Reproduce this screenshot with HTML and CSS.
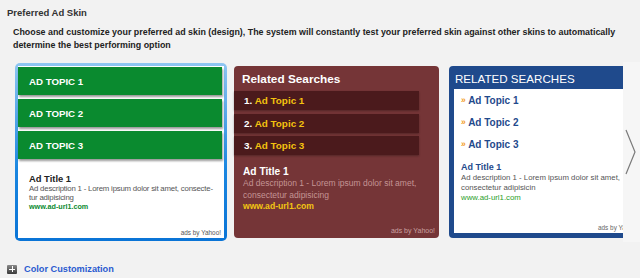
FILE: index.html
```html
<!DOCTYPE html>
<html lang="en">

<head>
    <meta charset="UTF-8">
    <meta name="viewport" content="width=device-width, initial-scale=1.0">
    <title>Preferred Ad Skin</title>
    <link rel="stylesheet" href="styles.css">
</head>

<body>
    <h1 class="section-title">Preferred Ad Skin</h1>
    <p class="intro">Choose and customize your preferred ad skin (design), The system will constantly test your preferred skin against other skins to automatically determine the best performing option</p>

    <div class="carousel">
        <div class="viewport">
            <div class="track">
                <div class="skin skin-green selected">
                    <div class="green-topic">AD TOPIC 1</div>
                    <div class="green-topic">AD TOPIC 2</div>
                    <div class="green-topic">AD TOPIC 3</div>
                    <div class="green-ad">
                        <div class="ad-title">Ad Title 1</div>
                        <div class="ad-desc">Ad description 1 - Lorem ipsum dolor sit amet, consecte-tur adipisicing</div>
                        <div class="ad-url">www.ad-url1.com</div>
                    </div>
                    <div class="ads-by">ads by Yahoo!</div>
                </div>

                <div class="skin skin-maroon">
                    <div class="maroon-head">Related Searches</div>
                    <div class="maroon-topic">1. <span>Ad Topic 1</span></div>
                    <div class="maroon-topic">2. <span>Ad Topic 2</span></div>
                    <div class="maroon-topic">3. <span>Ad Topic 3</span></div>
                    <div class="maroon-ad">
                        <div class="ad-title">Ad Title 1</div>
                        <div class="ad-desc">Ad description 1 - Lorem ipsum dolor sit amet, consectetur adipisicing</div>
                        <div class="ad-url">www.ad-url1.com</div>
                    </div>
                    <div class="ads-by">ads by Yahoo!</div>
                </div>

                <div class="skin skin-blue">
                    <div class="blue-head">RELATED SEARCHES</div>
                    <div class="blue-body">
                        <div class="blue-topic"><span>&raquo;</span> Ad Topic 1</div>
                        <div class="blue-topic"><span>&raquo;</span> Ad Topic 2</div>
                        <div class="blue-topic"><span>&raquo;</span> Ad Topic 3</div>
                        <div class="blue-ad">
                            <div class="ad-title">Ad Title 1</div>
                            <div class="ad-desc">Ad description 1 - Lorem ipsum dolor sit amet, consectetur adipisicin</div>
                            <div class="ad-url">www.ad-url1.com</div>
                        </div>
                        <div class="ads-by">ads by Yahoo!</div>
                    </div>
                </div>
            </div>
        </div>
        <div class="next">
            <svg width="12" height="46" viewBox="0 0 12 46">
                <polyline points="1,1 10,23 1,45" fill="none" stroke="#7a7a7a" stroke-width="1.2"/>
            </svg>
        </div>
    </div>

    <div class="expander">
        <span class="plus-icon"></span>
        <a class="expander-link">Color Customization</a>
    </div>
</body>

</html>
```

FILE: styles.css
```css
body {
    margin: 0;
    width: 640px;
    height: 278px;
    overflow: hidden;
    background: #f2f2f2;
    font-family: "Liberation Sans", Arial, sans-serif;
    color: #222;
}

.section-title {
    margin: 0;
    padding: 7px 0 0 7px;
    font-size: 9.5px;
    line-height: 12px;
    font-weight: bold;
    color: #333;
}

.intro {
    margin: 7px 0 0 13px;
    width: 615px;
    font-size: 8.9px;
    line-height: 13px;
    font-weight: bold;
    color: #222;
}

.carousel {
    display: flex;
    margin-top: 10px;
}

.viewport {
    width: 605px;
    padding: 4px 0 4px 18px;
    overflow: hidden;
}

.track {
    display: flex;
    gap: 10px;
}

.skin {
    position: relative;
    flex: 0 0 205px;
    height: 172px;
    box-sizing: border-box;
}

.selected::before {
    content: "";
    position: absolute;
    inset: -3px;
    z-index: -1;
    border-radius: 5px;
    background: linear-gradient(#8fc6f2, #1a86e0 60%, #0a74d6);
}

.ad-title {
    font-weight: bold;
}

.ads-by {
    position: absolute;
    right: 3px;
    bottom: 1px;
    font-size: 6.4px;
    line-height: 9px;
}

/* green skin */
.skin-green {
    flex-basis: 206px;
    background: #fff;
    padding-top: 1px;
}

.green-topic {
    width: 204px;
    height: 28px;
    margin-bottom: 4px;
    padding-left: 11px;
    box-sizing: border-box;
    background: #0a8a2f;
    box-shadow: 1px 2px 2px rgba(0, 0, 0, 0.4);
    color: #fff;
    font-size: 9.7px;
    font-weight: bold;
    line-height: 29px;
}

.green-ad {
    padding: 10px 0 0 11px;
}

.green-ad .ad-title {
    font-size: 9.4px;
    line-height: 11px;
    color: #222;
}

.green-ad .ad-desc {
    width: 188px;
    font-size: 7.8px;
    letter-spacing: -0.2px;
    line-height: 9px;
    color: #555;
}

.green-ad .ad-url {
    font-size: 7.2px;
    line-height: 9px;
    font-weight: bold;
    color: #0a8a2f;
}

.skin-green .ads-by {
    color: #555;
}

/* maroon skin */
.skin-maroon {
    background: #753537;
    border-radius: 4px;
    padding-top: 6px;
}

.maroon-head {
    padding-left: 8px;
    margin-bottom: 5px;
    font-size: 11.8px;
    line-height: 14px;
    font-weight: bold;
    color: #fff;
}

.maroon-topic {
    width: 185px;
    height: 19px;
    margin-bottom: 3.7px;
    padding-left: 10px;
    box-sizing: border-box;
    background: #4b1a1c;
    box-shadow: 0 1px 2px rgba(0, 0, 0, 0.3);
    font-size: 9.9px;
    font-weight: bold;
    line-height: 19px;
    color: #fff;
}

.maroon-topic span {
    color: #f3c20f;
}

.maroon-ad {
    padding: 7px 0 0 9px;
}

.maroon-ad .ad-title {
    font-size: 10.2px;
    line-height: 12px;
    color: #fff;
}

.maroon-ad .ad-desc {
    width: 192px;
    font-size: 8.5px;
    line-height: 11.5px;
    color: #c49494;
}

.maroon-ad .ad-url {
    font-size: 8.6px;
    line-height: 10px;
    font-weight: bold;
    color: #f3c512;
}

.skin-maroon .ads-by {
    right: 4px;
    bottom: 3px;
    color: #c9a0a0;
    font-size: 7px;
}

/* blue skin */
.skin-blue {
    background: #1f4a8c;
    border-radius: 4px;
    padding: 0 0 5px 5px;
    display: flex;
    flex-direction: column;
}

.blue-head {
    height: 23px;
    padding-left: 1px;
    font-size: 11.6px;
    line-height: 25px;
    color: #fff;
}

.blue-body {
    position: relative;
    flex: 1;
    background: #fff;
    padding: 0 0 0 7px;
}

.blue-topic {
    height: 22px;
    font-size: 10px;
    line-height: 22px;
    font-weight: bold;
    color: #1f4a8c;
}

.blue-topic span {
    color: #f39a1b;
    font-size: 8.5px;
    vertical-align: 1px;
}

.blue-ad {
    padding-top: 6px;
}

.blue-ad .ad-title {
    font-size: 9px;
    line-height: 12px;
    color: #1f4a8c;
}

.blue-ad .ad-desc {
    width: 185px;
    font-size: 7.8px;
    line-height: 10px;
    color: #555;
}

.blue-ad .ad-url {
    font-size: 7.8px;
    line-height: 10px;
    color: #2aa02a;
}

.skin-blue .ads-by {
    right: auto;
    left: 144px;
    bottom: 1px;
    color: #666;
}

/* next arrow */
.next {
    flex: 1;
    display: flex;
    align-items: center;
    padding: 0 0 0 2px;
    background: #f6f6f6;
}

/* footer expander */
.expander {
    display: flex;
    align-items: center;
    gap: 7px;
    margin: 22px 0 0 7px;
}

.plus-icon {
    position: relative;
    width: 10px;
    height: 9px;
    border-radius: 1px;
    background: linear-gradient(#8a8a8a, #3a3a3a);
}

.plus-icon::before,
.plus-icon::after {
    content: "";
    position: absolute;
    background: #fff;
}

.plus-icon::before {
    left: 2px;
    top: 4px;
    width: 6px;
    height: 1px;
}

.plus-icon::after {
    left: 4.5px;
    top: 1.5px;
    width: 1px;
    height: 6px;
}

.expander-link {
    font-size: 9.2px;
    font-weight: bold;
    color: #2a5bd0;
}
```
